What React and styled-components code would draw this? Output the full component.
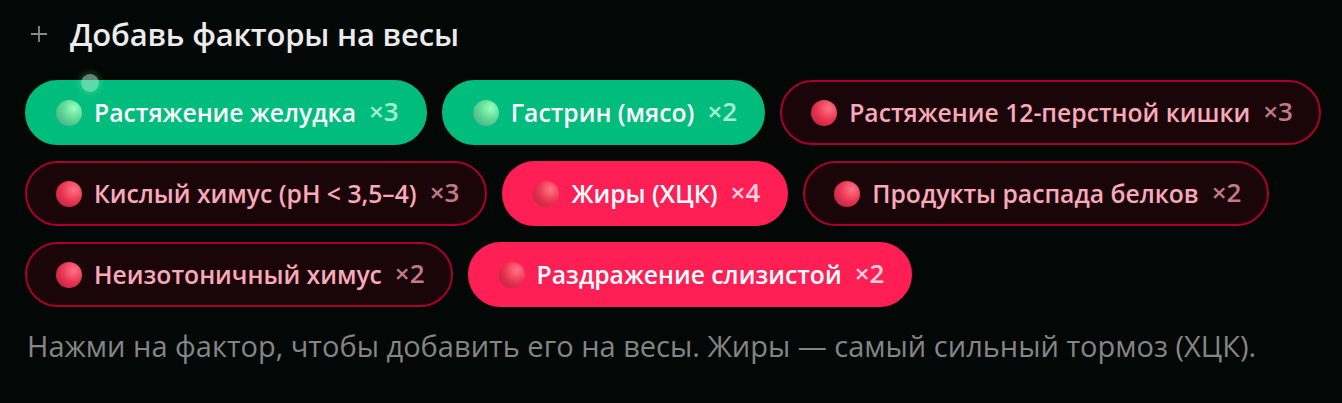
import styled, { createGlobalStyle } from 'styled-components';

const GlobalStyle = createGlobalStyle`
  html, body {
    margin: 0;
    padding: 0;
    background: #030705;
  }
  body {
    font-family: "Open Sans", "Noto Sans", sans-serif;
  }
`;

const factors = [
  { id: 1, label: 'Растяжение желудка', count: 3, kind: 'boost' },
  { id: 2, label: 'Гастрин (мясо)', count: 2, kind: 'boost' },
  { id: 3, label: 'Растяжение 12-перстной кишки', count: 3, kind: 'brake' },
  { id: 4, label: 'Кислый химус (pH < 3,5–4)', count: 3, kind: 'brake' },
  { id: 5, label: 'Жиры (ХЦК)', count: 4, kind: 'strong' },
  { id: 6, label: 'Продукты распада белков', count: 2, kind: 'brake' },
  { id: 7, label: 'Неизотоничный химус', count: 2, kind: 'brake' },
  { id: 8, label: 'Раздражение слизистой', count: 2, kind: 'strong' },
];

const chipColors = {
  boost: { bg: '#00bd7e', border: '#00bd7e', text: '#ffffff', count: '#a6f0cf' },
  strong: { bg: '#ff1f55', border: '#ff1f55', text: '#ffffff', count: '#ffd0dc' },
  brake: { bg: '#1a0508', border: '#a8002f', text: '#fba9ba', count: '#c27a88' },
};

const App = () => {
  return (
    <>
      <GlobalStyle />
      <Panel>
        <Header>
          <PlusIcon viewBox="0 0 20 20">
            <path d="M10 2v16M2 10h16" stroke="currentColor" strokeWidth="1.8" />
          </PlusIcon>
          <Title>Добавь факторы на весы</Title>
        </Header>

        <ChipArea>
          <Spark />
          {factors.map((f) => (
            <Chip key={f.id} $kind={f.kind}>
              <Dot $kind={f.kind} />
              <ChipLabel>{f.label}</ChipLabel>
              <Count $kind={f.kind}>×{f.count}</Count>
            </Chip>
          ))}
        </ChipArea>

        <Hint>
          Нажми на фактор, чтобы добавить его на весы. Жиры — самый сильный тормоз (ХЦК).
        </Hint>
      </Panel>
    </>
  );
};

const Panel = styled.div`
  padding: 14px 12px 30px 25px;
  color: #eee;
`;

const Header = styled.div`
  display: flex;
  align-items: center;
  gap: 21px;
  height: 40px;
  padding-left: 4px;
`;

const PlusIcon = styled.svg`
  width: 20px;
  height: 20px;
  color: #8a8a8a;
  flex-shrink: 0;
`;

const Title = styled.h2`
  margin: 0;
  font-size: 31px;
  font-weight: 600;
  color: #ececec;
  letter-spacing: -0.2px;
`;

const ChipArea = styled.div`
  position: relative;
  display: flex;
  flex-wrap: wrap;
  gap: 16px 15px;
  margin-top: 26px;
`;

const Spark = styled.span`
  position: absolute;
  left: 56px;
  top: -6px;
  width: 18px;
  height: 18px;
  border-radius: 50%;
  background: rgba(170, 240, 210, 0.55);
  box-shadow: 0 0 8px rgba(170, 255, 215, 0.35);
  z-index: 2;
`;

const Chip = styled.button`
  display: inline-flex;
  align-items: center;
  height: 65px;
  box-sizing: border-box;
  padding: 0 26px 0 29px;
  border-radius: 999px;
  border: 2px solid ${(p) => chipColors[p.$kind].border};
  background: ${(p) => chipColors[p.$kind].bg};
  color: ${(p) => chipColors[p.$kind].text};
  font-family: "Open Sans", "Noto Sans", sans-serif;
  cursor: pointer;
`;

const Dot = styled.span`
  width: 26px;
  height: 26px;
  border-radius: 50%;
  flex-shrink: 0;
  margin-right: 12px;
  background: ${(p) =>
    p.$kind === 'boost'
      ? 'radial-gradient(circle at 68% 32%, #9affc0 0%, #5fd893 45%, #3e9f86 100%)'
      : 'radial-gradient(circle at 68% 32%, #ff7488 0%, #e8334f 50%, #a8203e 100%)'};
`;

const ChipLabel = styled.span`
  font-size: 24.7px;
  font-weight: 600;
  white-space: nowrap;
`;

const Count = styled.span`
  margin-left: 13px;
  font-size: 26px;
  font-weight: 600;
  position: relative;
  top: -2px;
  color: ${(p) => chipColors[p.$kind].count};
`;

const Hint = styled.p`
  margin: 19px 0 0 2px;
  font-size: 29px;
  font-weight: 400;
  color: #858585;
`;

export default App;
